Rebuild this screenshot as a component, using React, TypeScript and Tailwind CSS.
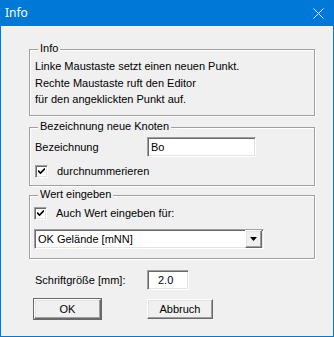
import React from 'react';

const sunken =
  'border border-t-[#a0a0a0] border-l-[#a0a0a0] border-b-white border-r-white shadow-[inset_1px_1px_0_#696969,inset_-1px_-1px_0_#e3e3e3]';

const raised =
  'border border-t-white border-l-white border-b-[#696969] border-r-[#696969] shadow-[inset_-1px_-1px_0_#a0a0a0,inset_1px_1px_0_#e3e3e3]';

const GroupBox: React.FC<{ label: string; className?: string; children?: React.ReactNode }> = ({
  label,
  className = '',
  children,
}) => (
  <div
    className={`relative border border-[#a0a0a0] shadow-[1px_1px_0_#fff,inset_1px_1px_0_#fff] ${className}`}
  >
    <span className="absolute -top-[8px] left-[8px] px-[2px] bg-[#f0f0f0] leading-[13px]">{label}</span>
    {children}
  </div>
);

const CheckBox: React.FC<{ label: string }> = ({ label }) => (
  <div className="flex items-center">
    <div className={`w-[13px] h-[13px] bg-white flex items-center justify-center ${sunken}`}>
      <svg width="7" height="7" viewBox="0 0 7 7" className="block">
        <path d="M0 2.5 L2.5 5 L7 0.5" fill="none" stroke="#000" strokeWidth="1.6" />
      </svg>
    </div>
    <span className="ml-[9px] leading-[13px]">{label}</span>
  </div>
);

export default function App() {
  return (
    <div className="w-[334px] h-[337px] bg-[#f0f0f0] border-x border-b border-[#0078d7] flex flex-col font-['Liberation_Sans',sans-serif] text-[11px] text-black">
      <div className="h-[26px] shrink-0 bg-[#0078d7] flex items-center justify-between pl-[4px] pr-[9px] text-white text-[12px] font-['Noto_Sans',sans-serif]">
        <span>Info</span>
        <svg width="11" height="11" viewBox="0 0 11 11" className="block">
          <path d="M0.5 0.5 L10.5 10.5 M10.5 0.5 L0.5 10.5" stroke="#fff" strokeWidth="1" />
        </svg>
      </div>

      <div className="flex flex-col pl-[28px] pr-[18px] pt-[23px]">
        <GroupBox label="Info" className="h-[67px]">
          <div className="pt-[8px] pl-[5px] leading-[16.5px]">
            <div>Linke Maustaste setzt einen neuen Punkt.</div>
            <div>Rechte Maustaste ruft den Editor</div>
            <div>für den angeklickten Punkt auf.</div>
          </div>
        </GroupBox>

        <GroupBox label="Bezeichnung neue Knoten" className="h-[59px] mt-[11px]">
          <div className="flex flex-col pt-[9px] pl-[5px]">
            <div className="flex items-center">
              <span className="w-[112px]">Bezeichnung</span>
              <div className={`w-[109px] h-[20px] bg-white flex items-center pl-[3px] ${sunken}`}>Bo</div>
            </div>
            <div className="mt-[8px]">
              <CheckBox label="durchnummerieren" />
            </div>
          </div>
        </GroupBox>

        <GroupBox label="Wert eingeben" className="h-[64px] mt-[9px]">
          <div className="flex flex-col pt-[11px] pl-[4px]">
            <CheckBox label="Auch Wert eingeben für:" />
            <div className={`mt-[9px] w-[230px] h-[20px] bg-white flex items-center justify-between ${sunken}`}>
              <span className="pl-[3px]">OK Gelände [mNN]</span>
              <div className={`w-[17px] h-[18px] bg-[#f0f0f0] flex items-center justify-center mr-px ${raised}`}>
                <svg width="7" height="4" viewBox="0 0 7 4" className="block">
                  <path d="M0 0 L7 0 L3.5 4 Z" fill="#000" />
                </svg>
              </div>
            </div>
          </div>
        </GroupBox>

        <div className="flex items-center mt-[11px] pl-[6px]">
          <span className="w-[112px]">Schriftgröße [mm]:</span>
          <div className={`w-[42px] h-[20px] bg-white flex items-center pl-[10px] ${sunken}`}>2.0</div>
        </div>

        <div className="flex items-center mt-[9px] pl-[5px]">
          <button
            className={`w-[67px] h-[20px] bg-[#f0f0f0] flex items-center justify-center border-[#000] outline outline-1 outline-[#696969] ${raised}`}
          >
            OK
          </button>
          <button
            className={`ml-[46px] w-[66px] h-[20px] bg-[#f0f0f0] flex items-center justify-center ${raised}`}
          >
            Abbruch
          </button>
        </div>
      </div>
    </div>
  );
}
